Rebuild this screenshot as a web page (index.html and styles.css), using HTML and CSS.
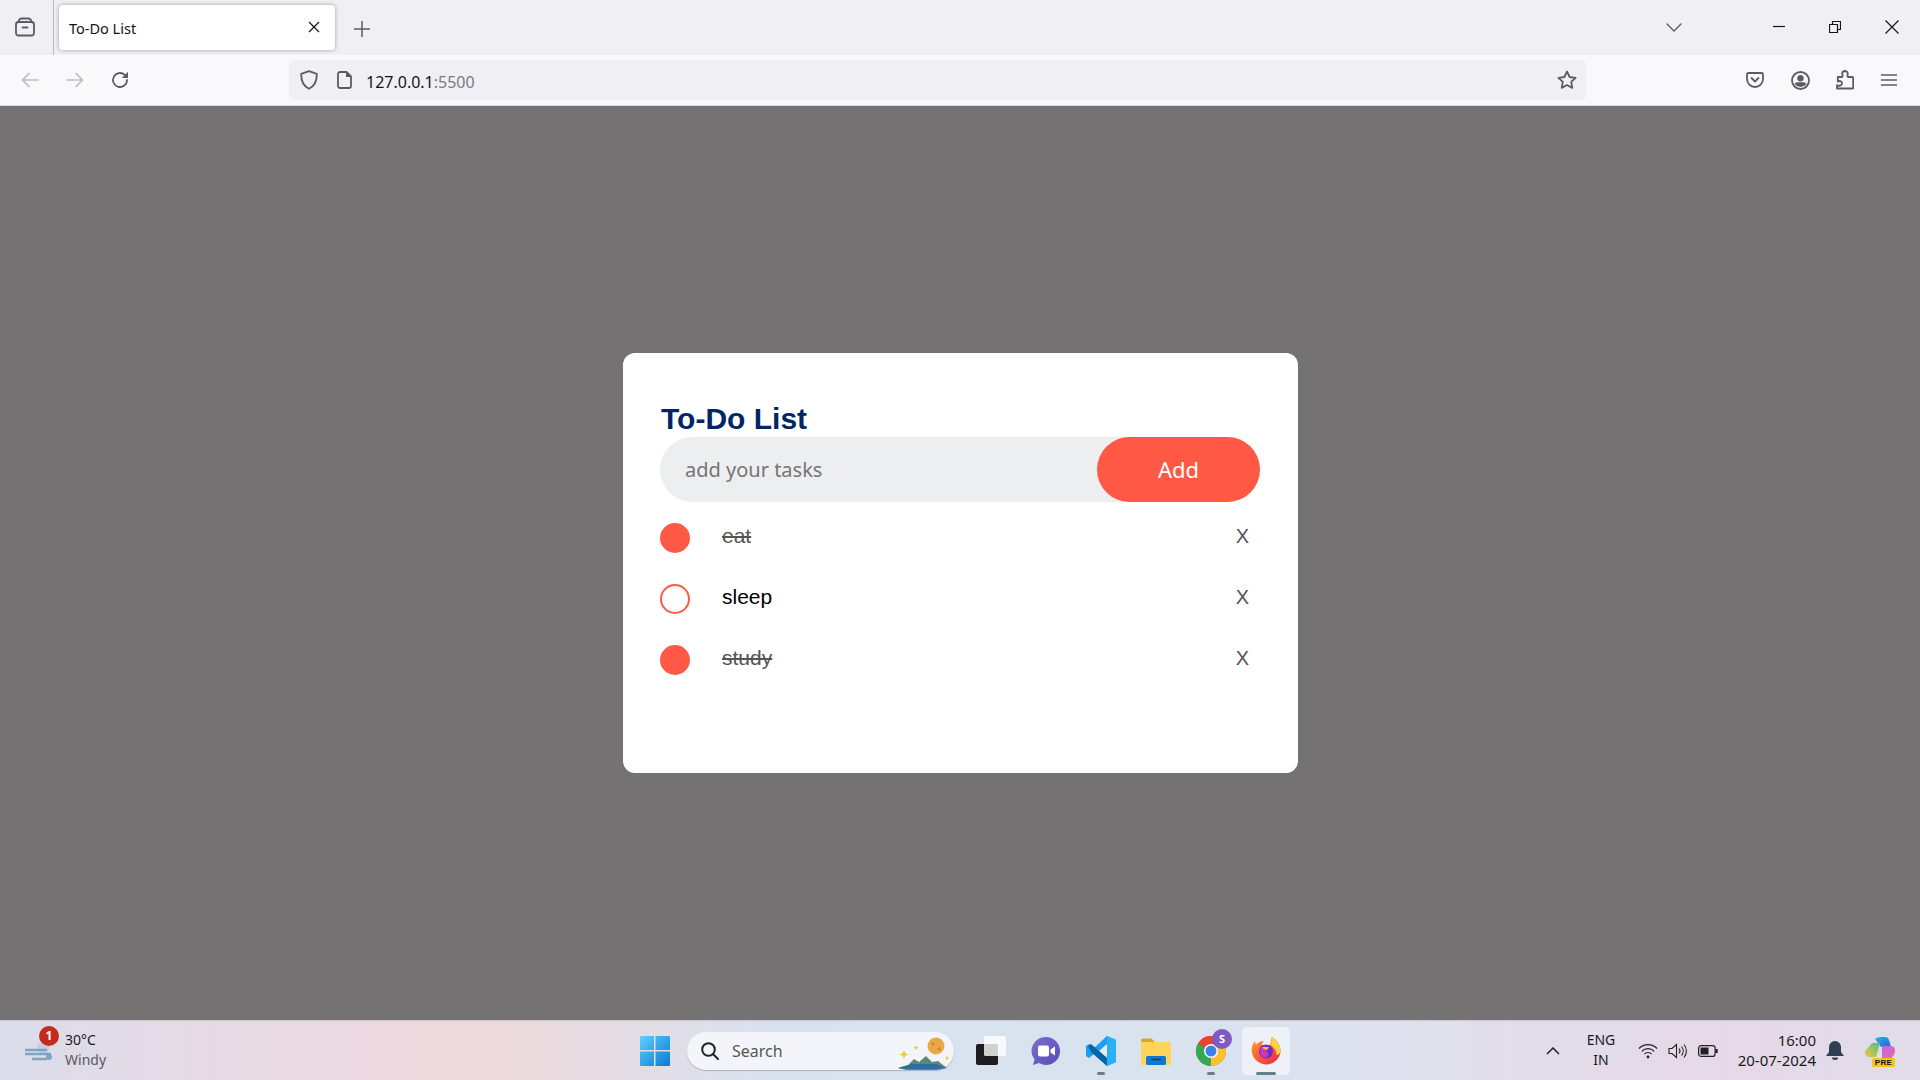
FILE: index.html
```html
<!DOCTYPE html>
<html lang="en">
<head>
<meta charset="utf-8">
<title>To-Do List</title>
<link rel="stylesheet" href="styles.css">
</head>
<body>
<div class="screen">
  <header class="tabbar">
    <div class="view-slot">
      <svg class="ico" width="20" height="20" viewBox="0 0 20 20"><path d="M3.500 4.500q1-3 3-3h7q2 0 3 3" /><rect x="1" y="5" width="18" height="13.500" rx="2.500"/><path d="M7.500 10.500h5"/></svg>
    </div>
    <div class="tab">
      <span class="tab-title">To-Do List</span>
      <svg class="thin" width="12" height="12" viewBox="0 0 12 12"><path d="M1 1l10 10M11 1L1 11"/></svg>
    </div>
    <svg class="newtab ico-thin" width="16" height="16" viewBox="0 0 16 16"><path d="M8 0v16M0 8h16"/></svg>
    <div class="spacer"></div>
    <svg class="chev" width="16" height="9" viewBox="0 0 16 9"><path d="M1 1l7 7 7-7"/></svg>
    <div class="winctl">
      <svg class="thin" width="12" height="12" viewBox="0 0 12 12"><path d="M0 5.500h12"/></svg>
      <svg class="thin" width="12" height="12" viewBox="0 0 12 12"><path d="M.5 3.500h8v8h-8zM3.500 3.500v-3h8v8h-3"/></svg>
      <svg class="thin" width="14" height="14" viewBox="0 0 14 14"><path d="M.5.500l13 13M13.500.500l-13 13"/></svg>
    </div>
  </header>

  <nav class="toolbar">
    <div class="nav-btns">
      <svg class="faint" width="18" height="16" viewBox="0 0 18 16"><path d="M17 8H1.500M8 1.500L1.500 8 8 14.500"/></svg>
      <svg class="faint" width="18" height="16" viewBox="0 0 18 16"><path d="M1 8h15.500M10 1.500L16.500 8 10 14.500"/></svg>
      <svg class="ico" width="18" height="18" viewBox="0 0 18 18"><path d="M16 9a7 7 0 1 1-2.200-5.100L16 6"/><path class="solid" d="M17 .8V7h-6.200z"/></svg>
    </div>
    <div class="urlbar">
      <svg class="ico" width="18" height="20" viewBox="0 0 18 20"><path d="M9 1.200l7.800 2.600c.2 6.800-1.800 12-7.800 15-6-3-8-8.200-7.800-15z"/></svg>
      <svg class="ico" width="15" height="18" viewBox="0 0 15 18"><path d="M3 1h6.500L14 5.500V15a2 2 0 0 1-2 2H3a2 2 0 0 1-2-2V3a2 2 0 0 1 2-2z"/><path class="solid" d="M9 1l5 5H9z"/></svg>
      <span class="url">127.0.0.1<span class="url-port">:5500</span></span>
      <div class="spacer"></div>
      <svg class="ico" width="20" height="20" viewBox="0 0 20 20"><path d="M10 1.500l2.600 5.500 6 .8-4.400 4.100 1.100 6L10 15l-5.300 2.900 1.100-6L1.400 7.800l6-.8z"/></svg>
    </div>
    <div class="tools">
      <svg class="ico" width="18" height="16" viewBox="0 0 18 16"><path d="M2.500 1h13A1.500 1.500 0 0 1 17 2.500V7a8 8 0 0 1-16 0V2.500A1.500 1.500 0 0 1 2.500 1z"/><path d="M5.500 6L9 9.500 12.500 6"/></svg>
      <svg class="ico" width="19" height="19" viewBox="0 0 19 19"><circle cx="9.500" cy="9.500" r="8.500"/><circle class="solid" cx="9.500" cy="7.200" r="3.200"/><path class="solid" d="M3.500 13q1-1.800 3-1.800h6q2 0 3 1.800-2.500 3-6 3t-6-3z"/></svg>
      <svg class="ico" width="18" height="20" viewBox="0 0 18 20"><path d="M1 18.500h15.500a.7.700 0 0 0 .7-.7V8a1 1 0 0 0-1-1h-4.200c-1.300-1-.2-2-.2-3.200A2.800 2.800 0 0 0 9 1 2.800 2.800 0 0 0 6.200 3.800c0 1.200 1.100 2.200-.2 3.200H1.800v4.500c1.200-1 4.200-.5 4.200 1.800S3 16.300 1 15.200z"/></svg>
      <svg class="ico-mid" width="16" height="14" viewBox="0 0 16 14"><path d="M0 2h16M0 7h16M0 12h16"/></svg>
    </div>
  </nav>

  <main class="page">
    <section class="card">
      <h2 class="card-title">To-Do List</h2>
      <div class="entry">
        <span class="entry-hint">add your tasks</span>
        <button class="entry-add" type="button">Add</button>
      </div>
      <ul class="tasks">
        <li class="task is-done"><span class="mark"></span><span class="task-name">eat</span><span class="task-x">X</span></li>
        <li class="task"><span class="mark"></span><span class="task-name">sleep</span><span class="task-x">X</span></li>
        <li class="task is-done"><span class="mark"></span><span class="task-name">study</span><span class="task-x">X</span></li>
      </ul>
    </section>
  </main>

  <footer class="taskbar">
    <div class="weather">
      <div class="weather-icon">
        <svg width="30" height="24" viewBox="0 0 30 24"><circle cx="18" cy="9" r="6" fill="#c3cfe0"/><path d="M1 11h20M1 15h24M8 20h13" fill="none" stroke="#7fa3c4" stroke-width="2.400" stroke-linecap="round"/><circle cx="24" cy="18" r="3" fill="#7fa3c4"/></svg>
        <span class="badge">1</span>
      </div>
      <div class="weather-text"><span>30°C</span><span class="muted">Windy</span></div>
    </div>
    <div class="apps">
      <svg width="30" height="30" viewBox="0 0 30 30">
        <defs><linearGradient id="w1" x1="0" y1="0" x2="1" y2="1"><stop offset="0" stop-color="#5fd0fb"/><stop offset="1" stop-color="#0a78d8"/></linearGradient></defs>
        <path fill="url(#w1)" d="M1 0h13v14H0V1a1 1 0 0 1 1-1zM15.500 0H29a1 1 0 0 1 1 1v13H15.500zM0 15.500h14V30H1a1 1 0 0 1-1-1zM15.500 15.500H30V29a1 1 0 0 1-1 1H15.500z"/>
      </svg>
      <div class="search">
        <svg width="18" height="18" viewBox="0 0 18 18" fill="none" stroke="#222" stroke-width="2"><circle cx="7.500" cy="7.500" r="6.300"/><path d="M12 12l5 5" stroke-linecap="round"/></svg>
        <span class="search-text">Search</span>
        <svg class="search-art" width="52" height="38" viewBox="0 0 52 38">
          <circle cx="38" cy="14" r="8.500" fill="#e9a847"/><circle cx="35" cy="12" r="1.500" fill="#c98432"/><circle cx="41" cy="17" r="1.500" fill="#c98432"/>
          <path d="M0 36l10-3 6-6 5 3 7-6 6 6 6-1 9 7-10 2H8z" fill="#5b8a73"/><path d="M0 36l14-4h24l10 4-8 1H6z" fill="#2e6ca4"/>
          <path d="M6 18l1.300 3.200L10.500 22.500l-3.200 1.300L6 27l-1.300-3.200L1.500 22.500l3.200-1.300zM18 13l.8 2 2 .8-2 .8-.8 2-.8-2-2-.8 2-.8z" fill="#f3c83c"/><circle cx="49" cy="26" r="1.400" fill="#f3c83c"/>
        </svg>
      </div>
      <div class="pins">
        <div class="pin">
          <svg width="30" height="30" viewBox="0 0 30 30"><rect x="0" y="8" width="22" height="21" rx="2" fill="#1d1d1d"/><rect x="8" y="0" width="22" height="20" rx="1.500" fill="#fff" fill-opacity=".8"/></svg>
        </div>
        <div class="pin">
          <svg width="30" height="30" viewBox="0 0 30 30"><defs><linearGradient id="t1" x1="0" y1="0" x2="1" y2="1"><stop offset="0" stop-color="#7b6fd0"/><stop offset="1" stop-color="#5a4bb8"/></linearGradient></defs><path fill="url(#t1)" d="M15 1a14 14 0 1 1-7 26.100L2 29l1.500-5.500A14 14 0 0 1 15 1z"/><rect x="7" y="9.500" width="11" height="11" rx="2" fill="#fff"/><path d="M19.500 13.500L24 10.500v9l-4.500-3z" fill="#fff"/></svg>
        </div>
        <div class="pin">
          <svg width="30" height="30" viewBox="0 0 30 30"><path d="M21 0l9 4v22l-9 4L8 18l-5 4-3-2v-10l3-2 5 4z" fill="#1f9cf0"/><path d="M21 0l9 4v22l-9 4z" fill="#2ab0f5"/><path d="M21 8l-8 7 8 7z" fill="#e0eef8"/><path d="M2 10l3-2 16 14v8L5 16z" fill="#0065a9"/></svg>
          <span class="dot"></span>
        </div>
        <div class="pin">
          <svg width="30" height="30" viewBox="0 0 30 30"><path d="M0 4a1.500 1.500 0 0 1 1.500-1.500h9L14 6H0z" fill="#e0a526"/><rect x="0" y="6" width="30" height="23" rx="1.500" fill="#ffd35c"/><rect x="5" y="20" width="20" height="9" rx="1.500" fill="#0f79cf"/><path d="M10 23.500h10" stroke="#0a3f73" stroke-width="1.500"/></svg>
        </div>
        <div class="pin">
          <svg width="30" height="30" viewBox="0 0 30 30"><circle cx="15" cy="15" r="15" fill="#ea4335"/><path d="M15 15L28 7.500A15 15 0 0 1 15 30z" fill="#fbc02d"/><path d="M15 15L15 30A15 15 0 0 1 2 7.500z" fill="#34a853"/><path d="M2 7.500A15 15 0 0 1 28 7.500H15z" fill="#ea4335"/><circle cx="15" cy="15" r="7" fill="#fff"/><circle cx="15" cy="15" r="5.500" fill="#3b82e8"/></svg>
          <span class="avatar">S</span>
          <span class="dot"></span>
        </div>
        <div class="pin is-active">
          <svg width="30" height="30" viewBox="0 0 30 30"><defs><linearGradient id="f1" x1="0" y1="0" x2="1" y2="1"><stop offset="0" stop-color="#ffa52e"/><stop offset=".5" stop-color="#ff5a36"/><stop offset="1" stop-color="#e5254f"/></linearGradient></defs><path d="M21 1c5 3 9 9 8.500 15A14.500 14.500 0 1 1 1.500 9L4 5l1 4c2-3 5-4 8-4-2 2-2 3-2 4h8c1-3 1-5 2-8z" fill="url(#f1)"/><path d="M21 1c5 3 9 9 8.500 15-1 2-2 3-4 3 0-5-3-8-6-10 1-3 1-5 1.500-8z" fill="#ffd23f"/><circle cx="15" cy="15.500" r="7" fill="#6f2bc4"/><path d="M9 13c3-3 7-3 9 0-2 0-3 1-3 2 3 1 3 4 1 6-4 2-8-2-7-8z" fill="#c93bb4"/><path d="M11 11h7l-2 3c-2 0-4-1-5-3z" fill="#ffb347"/></svg>
          <span class="bar"></span>
        </div>
      </div>
    </div>
    <div class="tray">
      <svg class="tray-chev" width="14" height="8" viewBox="0 0 14 8" fill="none" stroke="#222" stroke-width="1.500"><path d="M1 7l6-6 6 6"/></svg>
      <div class="lang"><span>ENG</span><span>IN</span></div>
      <div class="tray-icons">
        <svg width="20" height="16" viewBox="0 0 20 16" fill="none" stroke="#222" stroke-width="1.200"><path d="M1 5.500a12.500 12.500 0 0 1 18 0M3.800 8.300a8.500 8.500 0 0 1 12.400 0M6.500 11a4.800 4.800 0 0 1 7 0"/><circle cx="10" cy="14" r="1.400" fill="#222" stroke="none"/></svg>
        <svg width="20" height="16" viewBox="0 0 20 16" fill="none" stroke="#222" stroke-width="1.100"><path d="M1 5.500h3L8.500 1.500v13L4 10.500H1z"/><path d="M11 5.500a4 4 0 0 1 0 5M13.500 3.500a7 7 0 0 1 0 9M16 1.500a10 10 0 0 1 0 13"/></svg>
        <svg width="20" height="12" viewBox="0 0 20 12" fill="none" stroke="#222" stroke-width="1.200"><rect x=".6" y=".6" width="16.500" height="10.800" rx="2.500"/><rect x="2.500" y="2.500" width="8" height="7" fill="#222" stroke="none"/><path d="M18.500 4v4" stroke-width="2.400"/></svg>
      </div>
      <div class="clock"><span>16:00</span><span>20-07-2024</span></div>
      <svg class="bell" width="18" height="19" viewBox="0 0 18 19"><path d="M9 0a6 6 0 0 1 6 6v5l3 4H0l3-4V6a6 6 0 0 1 6-6z" fill="#2e4152"/><path d="M6 16.500h6a3 2.500 0 0 1-6 0z" fill="#2e4152"/></svg>
      <div class="copilot">
        <svg width="30" height="26" viewBox="0 0 30 26"><defs><linearGradient id="c1" x1="0" y1="0" x2="1" y2="1"><stop offset="0" stop-color="#27b4e8"/><stop offset="1" stop-color="#2b62d9"/></linearGradient><linearGradient id="c2" x1="0" y1="1" x2="1" y2="0"><stop offset="0" stop-color="#f6c83b"/><stop offset="1" stop-color="#42c08a"/></linearGradient><linearGradient id="c3" x1="0" y1="0" x2="1" y2="1"><stop offset="0" stop-color="#b56be0"/><stop offset="1" stop-color="#f06aa8"/></linearGradient></defs><path d="M10 2Q12 0 16 0h4q3 0 4 3l2 7H16z" fill="url(#c1)"/><path d="M7 6h8l-4 14H5Q0 20 0 16q0-3 2-4z" fill="url(#c2)"/><path d="M17 9h8q5 0 5 4 0 6-5 9h-8z" fill="url(#c3)"/></svg>
        <span class="pre">PRE</span>
      </div>
    </div>
  </footer>
</div>
</body>
</html>
```
FILE: styles.css
```css
* { box-sizing: border-box; }
html, body { margin: 0; padding: 0; }
body { font-family: "Noto Sans", "Open Sans", sans-serif; color: #15141a; }
.screen { width: 1920px; height: 1080px; display: flex; flex-direction: column; overflow: hidden; }
.spacer { flex: 1; }

svg { display: block; flex: none; }
.ico, .ico-mid, .ico-thin, .faint, .thin, .chev { fill: none; stroke-linecap: round; stroke-linejoin: round; }
.ico { stroke: #5b5b66; stroke-width: 1.800; }
.ico-mid { stroke: #5b5b66; stroke-width: 1.600; stroke-linecap: butt; }
.ico-thin { stroke: #5b5b66; stroke-width: 1.500; }
.faint { stroke: #bdbdc2; stroke-width: 1.700; }
.thin { stroke: #15141a; stroke-width: 1.200; stroke-linecap: butt; }
.chev { stroke: #5b5b66; stroke-width: 1.400; }
.solid { fill: #5b5b66; stroke: none; }

/* tab strip */
.tabbar { height: 55px; background: #f0f0f4; display: flex; align-items: center; flex: none; }
.view-slot { width: 54px; height: 55px; border-right: 1px solid #b9b9bf; display: flex; align-items: center; justify-content: center; padding-right: 4px; padding-bottom: 1px; }
.tab { width: 276px; height: 45px; margin-left: 5px; margin-bottom: 1px; background: #fff; border-radius: 4px; box-shadow: 0 0 4px rgba(0, 0, 0, .35); display: flex; align-items: center; justify-content: space-between; padding: 0 15px 0 10px; }
.tab-title { font-size: 14.500px; line-height: 20px; margin-top: 2px; }
.newtab { margin-left: 19px; margin-top: 3px; }
.tabbar > .chev { margin-right: 91px; margin-top: -1px; }
.winctl { display: flex; align-items: center; gap: 44px; padding-right: 21px; margin-top: -1px; }

/* nav toolbar */
.toolbar { height: 51px; background: #f9f9fb; display: flex; align-items: center; flex: none; padding-left: 21px; border-bottom: 1px solid #d8d8dc; }
.nav-btns { display: flex; align-items: center; gap: 27px; width: 268px; }
.urlbar { width: 1297px; height: 40px; background: #f0f0f4; border-radius: 5px; display: flex; align-items: center; padding: 0 9px 0 11px; }
.urlbar > svg:nth-child(2) { margin-left: 19px; }
.url { margin-left: 14px; font-size: 16px; margin-top: 3px; color: #15141a; }
.url-port { color: #7b7b84; }
.tools { display: flex; align-items: center; gap: 26.500px; margin-left: 160px; }

/* page */
.page { flex: 1; background: #747273; display: flex; align-items: center; justify-content: center; }
.card { width: 675px; height: 420px; background: #fff; border-radius: 12px; padding: 47px 37.500px 0; }
.card-title { margin: 0 0 0 1px; height: 37px; font: bold 30px/37px "Liberation Sans", Arial, sans-serif; color: #002765; }
.entry { height: 65px; background: #edeef0; border-radius: 33px; display: flex; align-items: center; justify-content: space-between; padding-left: 25px; }
.entry-hint { font-size: 20px; color: #757575; }
.entry-add { width: 163px; height: 65px; border: 0; border-radius: 33px; background: #ff5945; color: #fff; font: 22px "Noto Sans", sans-serif; padding: 0 0 2px; }
.tasks { list-style: none; margin: 6px 0 0; padding: 0; }
.task { height: 61px; display: flex; align-items: flex-start; font: 21px/24px "Liberation Sans", Arial, sans-serif; color: #000; }
.mark { width: 30px; height: 30px; border-radius: 50%; border: 2px solid #ff5945; margin-top: 15px; flex: none; }
.task-name { margin: 16px 0 0 32px; flex: 1; }
.task-x { margin: 16px 11px 0 0; font-size: 20px; color: #555; }
.is-done .mark { background: #ff5945; }
.is-done .task-name { color: #555; text-decoration: line-through; }

/* taskbar */
.taskbar { height: 60px; flex: none; display: grid; grid-template-columns: 640px 650px 1fr; align-items: center; border-top: 1px solid #c9c7cc; background: linear-gradient(90deg, #dcdcea 0, #ecd8df 20%, #eddadc 26%, #d9e1ee 40%, #d8e3ef 62%, #e0dfec 75%, #e6d8e8 90%, #e0dcea 100%); font-size: 14px; line-height: 20px; color: #1a1a1a; }
.weather { display: flex; align-items: center; padding-left: 25px; gap: 11px; }
.weather-icon { position: relative; width: 29px; height: 24px; margin-top: 1px; }
.badge { position: absolute; left: 14px; top: -13px; width: 20px; height: 20px; border-radius: 50%; background: #c42b1c; color: #fff; font-size: 12px; font-weight: 700; line-height: 20px; text-align: center; }
.weather-text { display: flex; flex-direction: column; margin-top: -2px; }
.muted { color: #5a5a64; }
.apps { display: flex; align-items: center; }
.search { width: 273px; height: 38px; margin-left: 17px; background: #f3f5fa; border-radius: 19px; box-shadow: 0 1px 1px rgba(60, 70, 90, .3); display: flex; align-items: center; padding-left: 14px; position: relative; }
.search-text { font-size: 16px; color: #555; margin-left: 13px; }
.search-art { position: absolute; right: 4px; top: 0; }
.pins { display: flex; align-items: center; margin-left: 9px; }
.pin { width: 55px; height: 48px; display: flex; align-items: center; justify-content: center; position: relative; }
.is-active { width: 48px; margin-left: 4px; background: #eef2f8; border-radius: 5px; }
.dot { position: absolute; left: 50%; bottom: 0; width: 8px; height: 3px; margin-left: -4px; border-radius: 2px; background: #6f7a85; }
.bar { position: absolute; left: 14px; bottom: 0; width: 20px; height: 3px; border-radius: 2px; background: #5f8090; }
.avatar { position: absolute; left: 29px; top: 2px; width: 20px; height: 20px; border-radius: 50%; background: #7e5bc2; color: #fff; font-size: 11px; font-weight: 700; line-height: 20px; text-align: center; }
.tray { display: flex; align-items: center; padding-left: 256px; }
.lang { width: 58px; margin-left: 12px; display: flex; flex-direction: column; align-items: center; margin-top: -2px; }
.tray-icons { display: flex; align-items: center; gap: 10px; margin-left: 8px; }
.clock { width: 100px; font-size: 15px; display: flex; flex-direction: column; align-items: flex-end; margin-left: -2px; margin-top: -2px; }
.bell { margin-left: 10px; }
.copilot { position: relative; margin-left: 21px; width: 30px; height: 28px; }
.pre { position: absolute; left: 7px; bottom: -2px; width: 23px; height: 9px; border-radius: 2px; background: #f5c518; color: #111; font: 700 8px/9px "Liberation Sans", sans-serif; text-align: center; letter-spacing: .4px; }
```
